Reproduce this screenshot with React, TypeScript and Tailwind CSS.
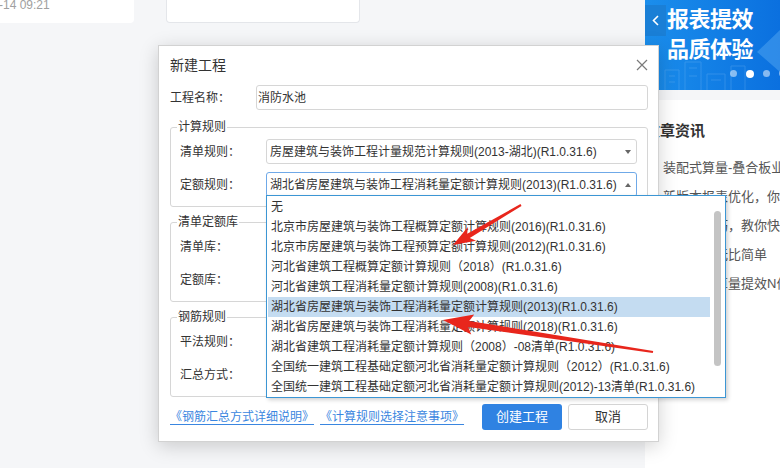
import React from "react";

const quotaRules = [
  "无",
  "北京市房屋建筑与装饰工程概算定额计算规则(2016)(R1.0.31.6)",
  "北京市房屋建筑与装饰工程预算定额计算规则(2012)(R1.0.31.6)",
  "河北省建筑工程概算定额计算规则（2018）(R1.0.31.6)",
  "河北省建筑工程消耗量定额计算规则(2008)(R1.0.31.6)",
  "湖北省房屋建筑与装饰工程消耗量定额计算规则(2013)(R1.0.31.6)",
  "湖北省房屋建筑与装饰工程消耗量定额计算规则(2018)(R1.0.31.6)",
  "湖北省建筑工程消耗量定额计算规则（2008）-08清单(R1.0.31.6)",
  "全国统一建筑工程基础定额河北省消耗量定额计算规则（2012）(R1.0.31.6)",
  "全国统一建筑工程基础定额河北省消耗量定额计算规则(2012)-13清单(R1.0.31.6)",
];

const news = [
  "装配式算量-叠合板业务详解",
  "新版本报表优化，你get了吗",
  "算量小技巧，教你快速上手",
  "钢筋翻样无比简单",
  "一键智能算量提效N倍",
];

function Caret({ up }: { up?: boolean }) {
  return (
    <svg width="6" height="4" viewBox="0 0 6 4" className="shrink-0">
      <path d={up ? "M0 4 L3 0 L6 4 Z" : "M0 0 L6 0 L3 4 Z"} fill="#666" />
    </svg>
  );
}

function Select({ value, active, up }: { value?: string; active?: boolean; up?: boolean }) {
  return (
    <div
      className={`flex h-[25px] flex-1 items-center justify-between rounded-[3px] border bg-white pl-[3px] pr-[5px] ${
        active ? "border-[#6fa9e8]" : "border-[#d6d6d6]"
      }`}
    >
      <span className="truncate">{value}</span>
      <Caret up={up} />
    </div>
  );
}

function Row({ label, children }: { label: string; children: React.ReactNode }) {
  return (
    <div className="flex h-[25px] items-center">
      <span className="w-[86px] shrink-0">{label}</span>
      {children}
    </div>
  );
}

function Group({ title, children }: { title: string; children: React.ReactNode }) {
  return (
    <fieldset className="mt-[7px] rounded-[3px] border border-[#d6d6d6] pb-[9px] pl-[9px] pr-[10px] pt-[4px] first-of-type:mt-[9px]">
      <legend className="ml-[-3px] px-[1px] text-[12px] leading-[16px]">{title}</legend>
      <div className="flex flex-col gap-[8px]">{children}</div>
    </fieldset>
  );
}

export default function App() {
  return (
    <div className="relative h-[468px] w-[780px] overflow-hidden bg-[#f5f6f8] font-['Liberation_Sans','Noto_Sans_CJK_SC',sans-serif] text-[12px] text-[#333]">
      <div className="flex h-full">
        {/* page behind the dialog */}
        <div className="flex flex-1 items-start">
          <div className="flex h-[23px] w-[134px] items-end rounded-br-[4px] bg-white pb-[11px]">
            <span className="ml-[-1px] leading-[14px] text-[#a0a0a0]">-14 09:21</span>
          </div>
          <div className="ml-[32px] h-[23px] w-[194px] rounded-b-[4px] border border-t-0 border-[#e4e6ea] bg-white" />
        </div>

        <aside className="flex w-[135px] flex-col">
          <div className="relative h-[90px] overflow-hidden bg-linear-to-r from-[#1b8eec] to-[#0b70df] pt-[5px]">
            <svg className="absolute inset-0" width="135" height="90" viewBox="0 0 135 90">
              <path d="M112 52 L135 30 L135 72 Z" fill="#5aaef5" opacity="0.45" />
              <g stroke="#8cc4f7" strokeWidth="1" fill="none" opacity="0.25">
                <path d="M20 90 V70 H34 V90 M40 90 V62 H56 V90 M62 90 V74 H80 V90 M86 90 V66 H100 V90" />
                <path d="M24 76 H30 M24 82 H30 M44 68 H52 M44 76 H52 M66 80 H76" />
              </g>
            </svg>
            <div className="relative flex">
              <div className="flex h-[31px] w-[21px] items-center justify-center bg-[#1a7fd6]">
                <svg width="7" height="11" viewBox="0 0 7 11">
                  <path d="M6 1 L1.5 5.5 L6 10" stroke="#fff" strokeWidth="1.6" fill="none" />
                </svg>
              </div>
              <div className="ml-[1px] text-[22px] font-bold leading-[30px] tracking-[-0.5px] text-white">
                <div>报表提效</div>
                <div>品质体验</div>
              </div>
            </div>
            <div className="relative mt-[5px] flex gap-[9px] pl-[85px]">
              <span className="h-[7px] w-[7px] shrink-0 rounded-full bg-white/50" />
              <span className="h-[8px] w-[8px] shrink-0 rounded-full bg-white" />
              <span className="h-[7px] w-[7px] shrink-0 rounded-full bg-white/50" />
              <span className="h-[7px] w-[7px] shrink-0 rounded-full bg-white/50" />
            </div>
          </div>

          <div className="mt-[10px] flex-1 bg-white pt-[21px]">
            <h3 className="whitespace-nowrap text-[15px] font-bold leading-[20px] text-[#333]">文章资讯</h3>
            <ul className="mt-[12px]">
              {news.map((item) => (
                <li key={item} className="whitespace-nowrap pl-[18px] text-[13px] leading-[29px] text-[#555]">
                  {item}
                </li>
              ))}
            </ul>
          </div>
        </aside>
      </div>

      {/* dialog */}
      <div className="absolute left-[158px] top-[45px] flex h-[397px] w-[501px] flex-col border border-[#d2d2d2] bg-white pl-[11px] pr-[10px] pt-[9px] shadow-[0_4px_18px_rgba(0,0,0,0.18)]">
        <div className="flex h-[20px] items-center justify-between">
          <span className="text-[14px] leading-[20px]">新建工程</span>
          <svg width="12" height="12" viewBox="0 0 12 12">
            <path d="M1 1 L11 11 M11 1 L1 11" stroke="#7a7a7a" strokeWidth="1.2" />
          </svg>
        </div>

        <div className="mt-[10px] flex h-[25px] items-center">
          <span className="w-[86px] shrink-0">工程名称：</span>
          <div className="flex h-[25px] flex-1 items-center rounded-[3px] border border-[#d6d6d6] pl-[1px]">消防水池</div>
        </div>

        <Group title="计算规则">
          <Row label="清单规则：">
            <Select value="房屋建筑与装饰工程计量规范计算规则(2013-湖北)(R1.0.31.6)" />
          </Row>
          <Row label="定额规则：">
            <Select value="湖北省房屋建筑与装饰工程消耗量定额计算规则(2013)(R1.0.31.6)" active up />
          </Row>
        </Group>

        <Group title="清单定额库">
          <Row label="清单库：">
            <Select />
          </Row>
          <Row label="定额库：">
            <Select />
          </Row>
        </Group>

        <Group title="钢筋规则">
          <Row label="平法规则：">
            <Select />
          </Row>
          <Row label="汇总方式：">
            <Select />
          </Row>
        </Group>

        <div className="mt-[7px] flex items-center">
          <a className="text-[#3a86e0] underline underline-offset-[3px]">《钢筋汇总方式详细说明》</a>
          <a className="ml-[6px] text-[#3a86e0] underline underline-offset-[3px]">《计算规则选择注意事项》</a>
          <button className="ml-auto h-[26px] w-[80px] rounded-[3px] bg-[#2f82e2] text-[13px] text-white">创建工程</button>
          <button className="ml-[6px] h-[26px] w-[80px] rounded-[3px] border border-[#d4d4d4] bg-white text-[13px] text-[#333]">
            取消
          </button>
        </div>
      </div>

      {/* open dropdown of 定额规则 */}
      <div className="absolute left-[266px] top-[195px] flex h-[203px] w-[460px] border border-[#3c96d4] bg-white shadow-[2px_2px_4px_rgba(0,0,0,0.18)]">
        <ul className="flex-1 pl-[1px] pt-[1px]">
          {quotaRules.map((rule, i) => (
            <li
              key={rule}
              className={`h-[20px] whitespace-nowrap pl-[3px] leading-[20px] ${i === 5 ? "bg-[#c4dcf1]" : ""}`}
            >
              {rule}
            </li>
          ))}
        </ul>
        <div className="w-[15px] shrink-0 pl-[4px] pt-[15px]">
          <div className="h-[155px] w-[7px] rounded-full bg-[#c4c4c4]" />
        </div>
      </div>

      {/* annotation arrows */}
      <svg className="pointer-events-none absolute inset-0" width="780" height="468" viewBox="0 0 780 468">
        <polygon
          points="453,245 467.9,226.9 467.2,233.7 520.5,204.1 521.5,205.9 469.8,238.1 476.1,240.7"
          fill="#e8261c"
        />
        <polygon
          points="443,320 474.2,314.6 469.2,320.9 653.2,351 652.8,353 468.2,326.9 471.2,334.4"
          fill="#e8261c"
        />
      </svg>
    </div>
  );
}
